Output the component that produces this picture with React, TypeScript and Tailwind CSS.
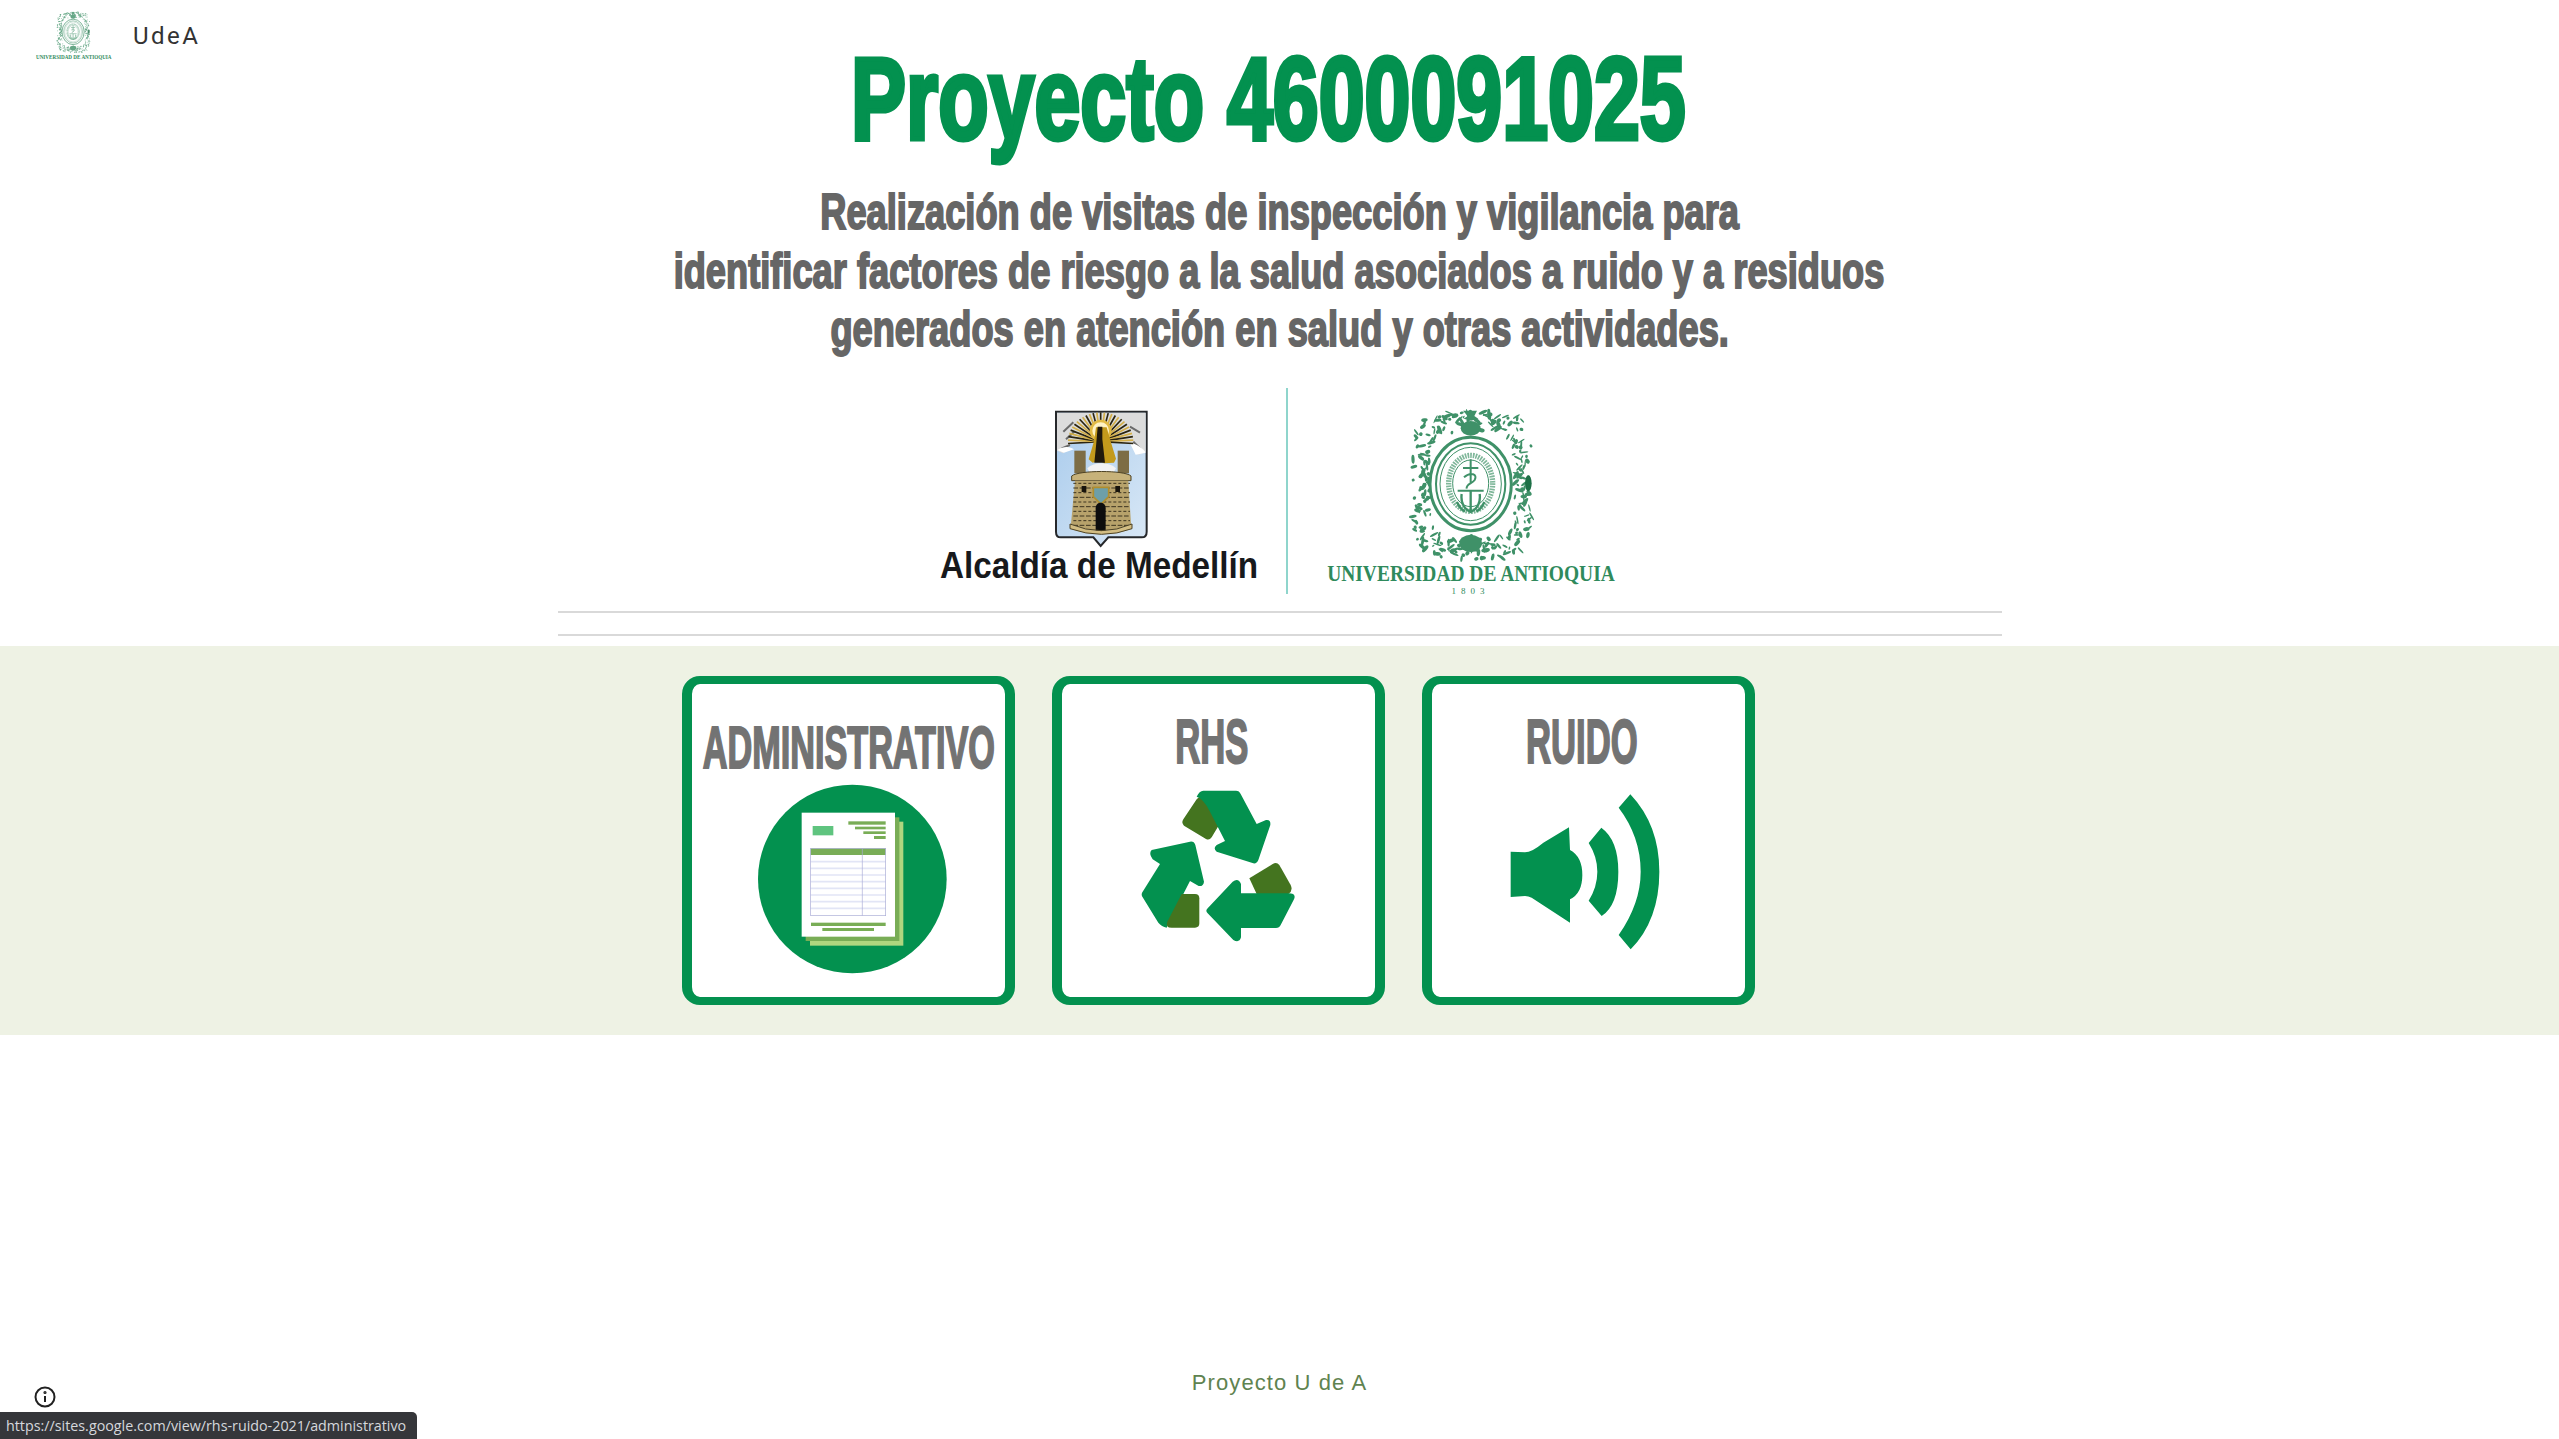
import React from 'react';

const GREEN = '#03914f';
const OLIVE = '#44741f';

// deterministic little wobble for the seal ornaments
const wobble = (i: number, k: number) => {
  const v = Math.sin(i * 12.9898 + k * 78.233) * 43758.5453;
  return v - Math.floor(v);
};

const Seal = ({ className }: { className?: string }) => {
  const leaves = Array.from({ length: 280 }, (_, i) => {
    const a = (i / 280) * Math.PI * 2;
    const c = Math.cos(a);
    const s = Math.sin(a);
    // squarish outline around the oval
    const p = 4.5;
    const r = Math.pow(Math.pow(Math.abs(c), p) + Math.pow(Math.abs(s), p), -1 / p);
    const out = 0.72 + wobble(i, 1) * 0.3;
    return {
      x: 250 + c * r * 176 * out,
      y: 255 + s * r * 218 * out,
      rx: 4 + wobble(i, 2) * 10,
      ry: 2 + wobble(i, 3) * 4,
      rot: wobble(i, 4) * 180,
    };
  });

  return (
    <svg viewBox="0 0 510 495" className={className}>
      <g fill="#3f9168">
        {leaves.map((l, i) => (
          <ellipse key={i} cx={l.x} cy={l.y} rx={l.rx} ry={l.ry} transform={`rotate(${l.rot} ${l.x} ${l.y})`} />
        ))}
        <path d="M222 32h42l-8 16 12 8-22 6-22-6 12-8z" />
        <ellipse cx="245" cy="85" rx="30" ry="22" />
        <ellipse cx="245" cy="430" rx="34" ry="26" />
        <ellipse cx="418" cy="250" rx="10" ry="24" fill="#1e7047" />
      </g>
      <ellipse cx="245" cy="252" rx="122" ry="140" fill="#fff" stroke="#3f9168" strokeWidth="9" />
      <ellipse cx="245" cy="252" rx="104" ry="122" fill="none" stroke="#3f9168" strokeWidth="6" />
      <ellipse cx="245" cy="252" rx="92" ry="110" fill="none" stroke="#3f9168" strokeWidth="3" />
      <ellipse cx="245" cy="250" rx="66" ry="84" fill="none" stroke="#7fb79a" strokeWidth="16" strokeDasharray="5 3" />
      <ellipse cx="245" cy="250" rx="54" ry="70" fill="none" stroke="#3f9168" strokeWidth="3" />
      <path d="M245 178v72M222 204h46M225 232c20-18 42-10 32 8-8 12-26 10-24 26M206 272h78" fill="none" stroke="#3f9168" strokeWidth="6" />
      <path d="M245 272v66M218 282c-4 32 10 46 27 54 17-8 31-22 27-54M204 306c6 14 14 24 24 28M286 306c-6 14-14 24-24 28" fill="none" stroke="#3f9168" strokeWidth="7" />
    </svg>
  );
};

const Shield = ({ className }: { className?: string }) => {
  const rays = Array.from({ length: 29 }, (_, i) => {
    const a = Math.PI * (0.98 + (i / 28) * 1.04);
    return { x: 212 + Math.cos(a) * 98, y: 125 + Math.sin(a) * 88, dark: i % 2 === 0 };
  });
  const stones = Array.from({ length: 10 }, (_, i) => 250 + i * 14);

  return (
    <svg viewBox="0 0 420 450" className={className}>
      <defs>
        <linearGradient id="sky" x1="0" y1="0" x2="1" y2="1">
          <stop offset="0" stopColor="#a9cbec" />
          <stop offset="1" stopColor="#d9e8f6" />
        </linearGradient>
      </defs>
      <path d="M78 35H350V395Q350 412 335 412H235L212 438 190 412H92Q78 412 78 395Z" fill="url(#sky)" stroke="#26282b" strokeWidth="6" />
      <path d="M81 38H347V155L325 165 300 130H125L100 160 81 152Z" fill="#dcdcdc" />
      <path d="M100 95l30-28M108 118l26-24M300 80l30 18M310 125l30 30M95 145l25-10" stroke="#6b6b6b" strokeWidth="6" fill="none" />
      <path d="M300 130c20 0 45 20 47 28l-30 6zM82 150c20-14 40-10 50-2l-30 10z" fill="#fff" />
      {rays.map((r, i) => (
        <line key={i} x1="212" y1="125" x2={r.x} y2={r.y} stroke={r.dark ? '#2a2410' : '#d4b04a'} strokeWidth="5" />
      ))}
      <circle cx="212" cy="92" r="33" fill="#e2bb45" />
      <circle cx="212" cy="92" r="25" fill="#fff3c4" />
      <rect x="133" y="152" width="34" height="68" fill="#7d6d45" />
      <rect x="263" y="152" width="34" height="68" fill="#7d6d45" />
      <path d="M172 205c20-20 66-20 86 0l-8 14h-70z" fill="#f3f3f3" />
      <path d="M198 82h32l10 36 18 58-6 12-30 2-12-8-22 6-12-10 16-54z" fill="#c39a1c" />
      <path d="M203 80h14v38l8 70h-32l6-60z" fill="#20190c" />
      <path d="M125 228c20-18 160-18 178 0v14H125z" fill="#c7b27a" stroke="#4e4324" strokeWidth="3" />
      <path d="M135 242H295L303 372Q215 412 123 372Z" fill="#b7a26b" />
      {stones.map((y, i) => (
        <line key={y} x1="130" x2="300" y1={y} y2={y} stroke="#3d3520" strokeWidth="3" strokeDasharray={i % 2 ? '14 5' : '9 6'} />
      ))}
      <rect x="155" y="258" width="14" height="18" fill="#17140c" />
      <rect x="256" y="258" width="14" height="18" fill="#17140c" />
      <path d="M190 262h46v28l-23 22-23-22z" fill="#6d9fa8" stroke="#b08e2e" strokeWidth="5" />
      <path d="M197 325c0-22 30-22 30 0v70h-30z" fill="#0d0d0d" />
      <path d="M120 372q95 40 186 0v14q-90 34-186 0z" fill="#d2bd83" stroke="#4e4324" strokeWidth="3" />
    </svg>
  );
};

const AdminIcon = () => (
  <svg viewBox="96 372 939 639" className="w-[313px] h-[213px]">
    <circle cx="577" cy="657" r="283" fill={GREEN} />
    <rect x="450" y="485" width="280" height="372" fill="#afd67f" />
    <rect x="437" y="472" width="281" height="371" fill="#79ad56" />
    <rect x="425" y="458" width="280" height="372" fill="#fff" />
    <rect x="458" y="498" width="62" height="28" fill="#5fc47f" />
    <g fill="#79ad56">
      <rect x="565" y="484" width="112" height="10" />
      <rect x="585" y="500" width="92" height="8" />
      <rect x="610" y="514" width="67" height="8" />
      <rect x="642" y="528" width="35" height="9" />
      <rect x="452" y="565" width="225" height="20" />
      <rect x="453" y="788" width="224" height="10" />
      <rect x="487" y="804" width="155" height="9" />
    </g>
    {[605, 625, 645, 665, 685, 705, 725, 745].map((y) => (
      <line key={y} x1="452" x2="677" y1={y} y2={y} stroke="#e2e5f6" strokeWidth="5" />
    ))}
    <rect x="452" y="565" width="225" height="202" fill="none" stroke="#a9abd6" strokeWidth="2" />
    <line x1="607" x2="607" y1="565" y2="767" stroke="#a9abd6" strokeWidth="2" />
  </svg>
);

const RecycleIcon = () => (
  <svg viewBox="66 372 939 639" className="w-[313px] h-[213px]">
    <path d="M470 418Q482 403 495 418L537 495 515 532Q508 542 498 537L432 497Q423 488 430 478Z" fill={OLIVE} />
    <path d="M490 392H588Q598 392 602 402L650 492 678 480Q693 478 691 495L655 600Q650 612 640 610L530 575Q518 565 530 555L555 543 510 455Q490 415 470 410 478 392 490 392Z" fill={GREEN} />
    <path d="M335 570 450 545Q462 543 466 555L492 665Q490 680 476 678L450 663 385 790 380 803Q365 800 355 788L308 712Q302 703 308 695L360 612 338 598Q325 580 335 570Z" fill={GREEN} />
    <path d="M425 702H465Q478 702 478 715V790Q478 803 465 803H395Q375 803 382 785Z" fill={OLIVE} />
    <path d="M628 655 698 612Q710 605 718 615L752 675Q760 692 745 702H650Z" fill={OLIVE} />
    <path d="M503 745 578 665Q595 652 603 672V700H745Q770 700 762 718L722 795Q718 804 708 804H603V832Q598 850 580 840L503 760Q495 752 503 745Z" fill={GREEN} />
  </svg>
);

const SpeakerIcon = () => (
  <svg viewBox="66 372 939 639" className="w-[313px] h-[213px]" fill={GREEN}>
    <path d="M302 575 345 577Q365 577 400 548L477 502 480 570Q517 590 517 645 517 700 480 718V788L365 713Q355 708 345 708L302 711Z" />
    <path d="M574 503Q625 540 625 635 625 735 575 768L536 722Q562 680 562 635 562 590 536 549Z" />
    <path d="M661 403Q748 495 748 635 748 780 662 868L626 825Q692 730 692 635 692 530 626 443Z" />
  </svg>
);

const cards = [
  { title: 'ADMINISTRATIVO', icon: <AdminIcon />, heading: 'pt-[35px] text-[59px] scale-x-[0.58]' },
  { title: 'RHS', icon: <RecycleIcon />, heading: 'pt-[28px] pr-[24px] text-[63px] scale-x-[0.55]' },
  { title: 'RUIDO', icon: <SpeakerIcon />, heading: 'pt-[28px] pr-[24px] text-[63px] scale-x-[0.55]' },
];

export default function App() {
  return (
    <div className="relative min-h-[1439px] bg-white overflow-hidden font-['Liberation_Sans',sans-serif]">
      {/* site header */}
      <div className="absolute left-[34px] top-[9px] flex items-start">
        <div className="w-[79px] flex flex-col items-center">
          <Seal className="w-[50px] h-[45px] shrink-0 opacity-80" />
          <span className="text-[7px] leading-[7px] font-bold whitespace-nowrap text-[#2f8a5c] font-['Liberation_Serif',serif] scale-x-[0.73]">
            UNIVERSIDAD DE ANTIOQUIA
          </span>
        </div>
        <span className="ml-[20px] mt-[13px] text-[24px] leading-[28px] tracking-[2.5px] text-[#333] font-['Roboto',sans-serif]">UdeA</span>
      </div>

      {/* title */}
      <div className="pt-[31px] flex flex-col items-center">
        <h1 className="pr-[31px] text-[116px] leading-[136px] font-bold whitespace-nowrap text-[#03914f] scale-x-[0.711] [-webkit-text-stroke:5px_#03914f]">
          Proyecto 4600091025
        </h1>
        <div className="mt-[16px] flex flex-col items-center text-[50px] leading-[58.7px] font-bold whitespace-nowrap text-[#666] [-webkit-text-stroke:2px_#666]">
          <p className="scale-x-[0.725]">Realización de visitas de inspección y vigilancia para</p>
          <p className="scale-x-[0.725]">identificar factores de riesgo a la salud asociados a ruido y a residuos</p>
          <p className="scale-x-[0.725]">generados en atención en salud y otras actividades.</p>
        </div>
      </div>

      {/* logos */}
      <div className="mt-[29px] w-[1444px] mx-auto h-[206px] flex">
        <div className="ml-[383px] w-[318px] pt-[12px] flex flex-col items-center">
          <Shield className="w-[140px] h-[150px] shrink-0" />
          <span className="-mt-[4px] text-[36px] leading-[40px] font-bold whitespace-nowrap text-[#17191c] scale-x-[0.925]">Alcaldía de Medellín</span>
        </div>
        <div className="ml-[27px] w-[2px] bg-[#8fd5cc]" />
        <div className="ml-[39px] w-[288px] pt-[12px] flex flex-col items-center">
          <Seal className="ml-[6px] w-[170px] h-[165px] shrink-0" />
          <span className="-mt-[1px] text-[23px] leading-[20px] font-bold whitespace-nowrap text-[#2f8a5c] font-['Liberation_Serif',serif] scale-x-[0.846]">
            UNIVERSIDAD DE ANTIOQUIA
          </span>
          <span className="mt-[2px] text-[9px] leading-[10px] tracking-[5px] text-[#2f8a5c] font-['Liberation_Serif',serif]">1803</span>
        </div>
      </div>

      {/* rules */}
      <div className="w-[1444px] mx-auto mt-[17px] h-[2px] bg-[#d9d9d9]" />
      <div className="w-[1444px] mx-auto mt-[21px] h-[2px] bg-[#d9d9d9]" />

      {/* cards band */}
      <div className="mt-[10px] h-[389px] bg-[#eef2e4] pl-[682px] pt-[30px] flex gap-[37px]">
        {cards.map((card) => (
          <a
            key={card.title}
            className="w-[333px] h-[329px] rounded-[18px] border-x-[10px] border-y-[8px] border-[#03914f] bg-white flex flex-col items-center overflow-hidden"
          >
            <div className="h-[100px] w-full flex justify-center">
              <span className={`${card.heading} leading-[59px] font-bold whitespace-nowrap text-[#737373] [-webkit-text-stroke:2px_#737373]`}>
                {card.title}
              </span>
            </div>
            {card.icon}
          </a>
        ))}
      </div>

      {/* footer */}
      <div className="mt-[334px] text-center text-[22px] leading-[28px] tracking-[1.1px] text-[#5f8350]">Proyecto U de A</div>

      {/* report abuse icon */}
      <svg viewBox="0 0 24 24" className="absolute left-[33px] top-[1385px] w-[24px] h-[24px]" fill="none" stroke="#212121" strokeWidth="2">
        <circle cx="12" cy="12" r="9.5" />
        <path d="M12 11v6" />
        <circle cx="12" cy="7.5" r="0.6" fill="#212121" />
      </svg>

      {/* link status bubble */}
      <div className="absolute left-0 bottom-0 w-[417px] h-[27px] bg-[#35363a] rounded-tr-[5px] pl-[6px] text-[14.3px] leading-[27px] whitespace-nowrap text-[#d5d8dc] font-['Open_Sans',sans-serif]">
        https://sites.google.com/view/rhs-ruido-2021/administrativo
      </div>
    </div>
  );
}
